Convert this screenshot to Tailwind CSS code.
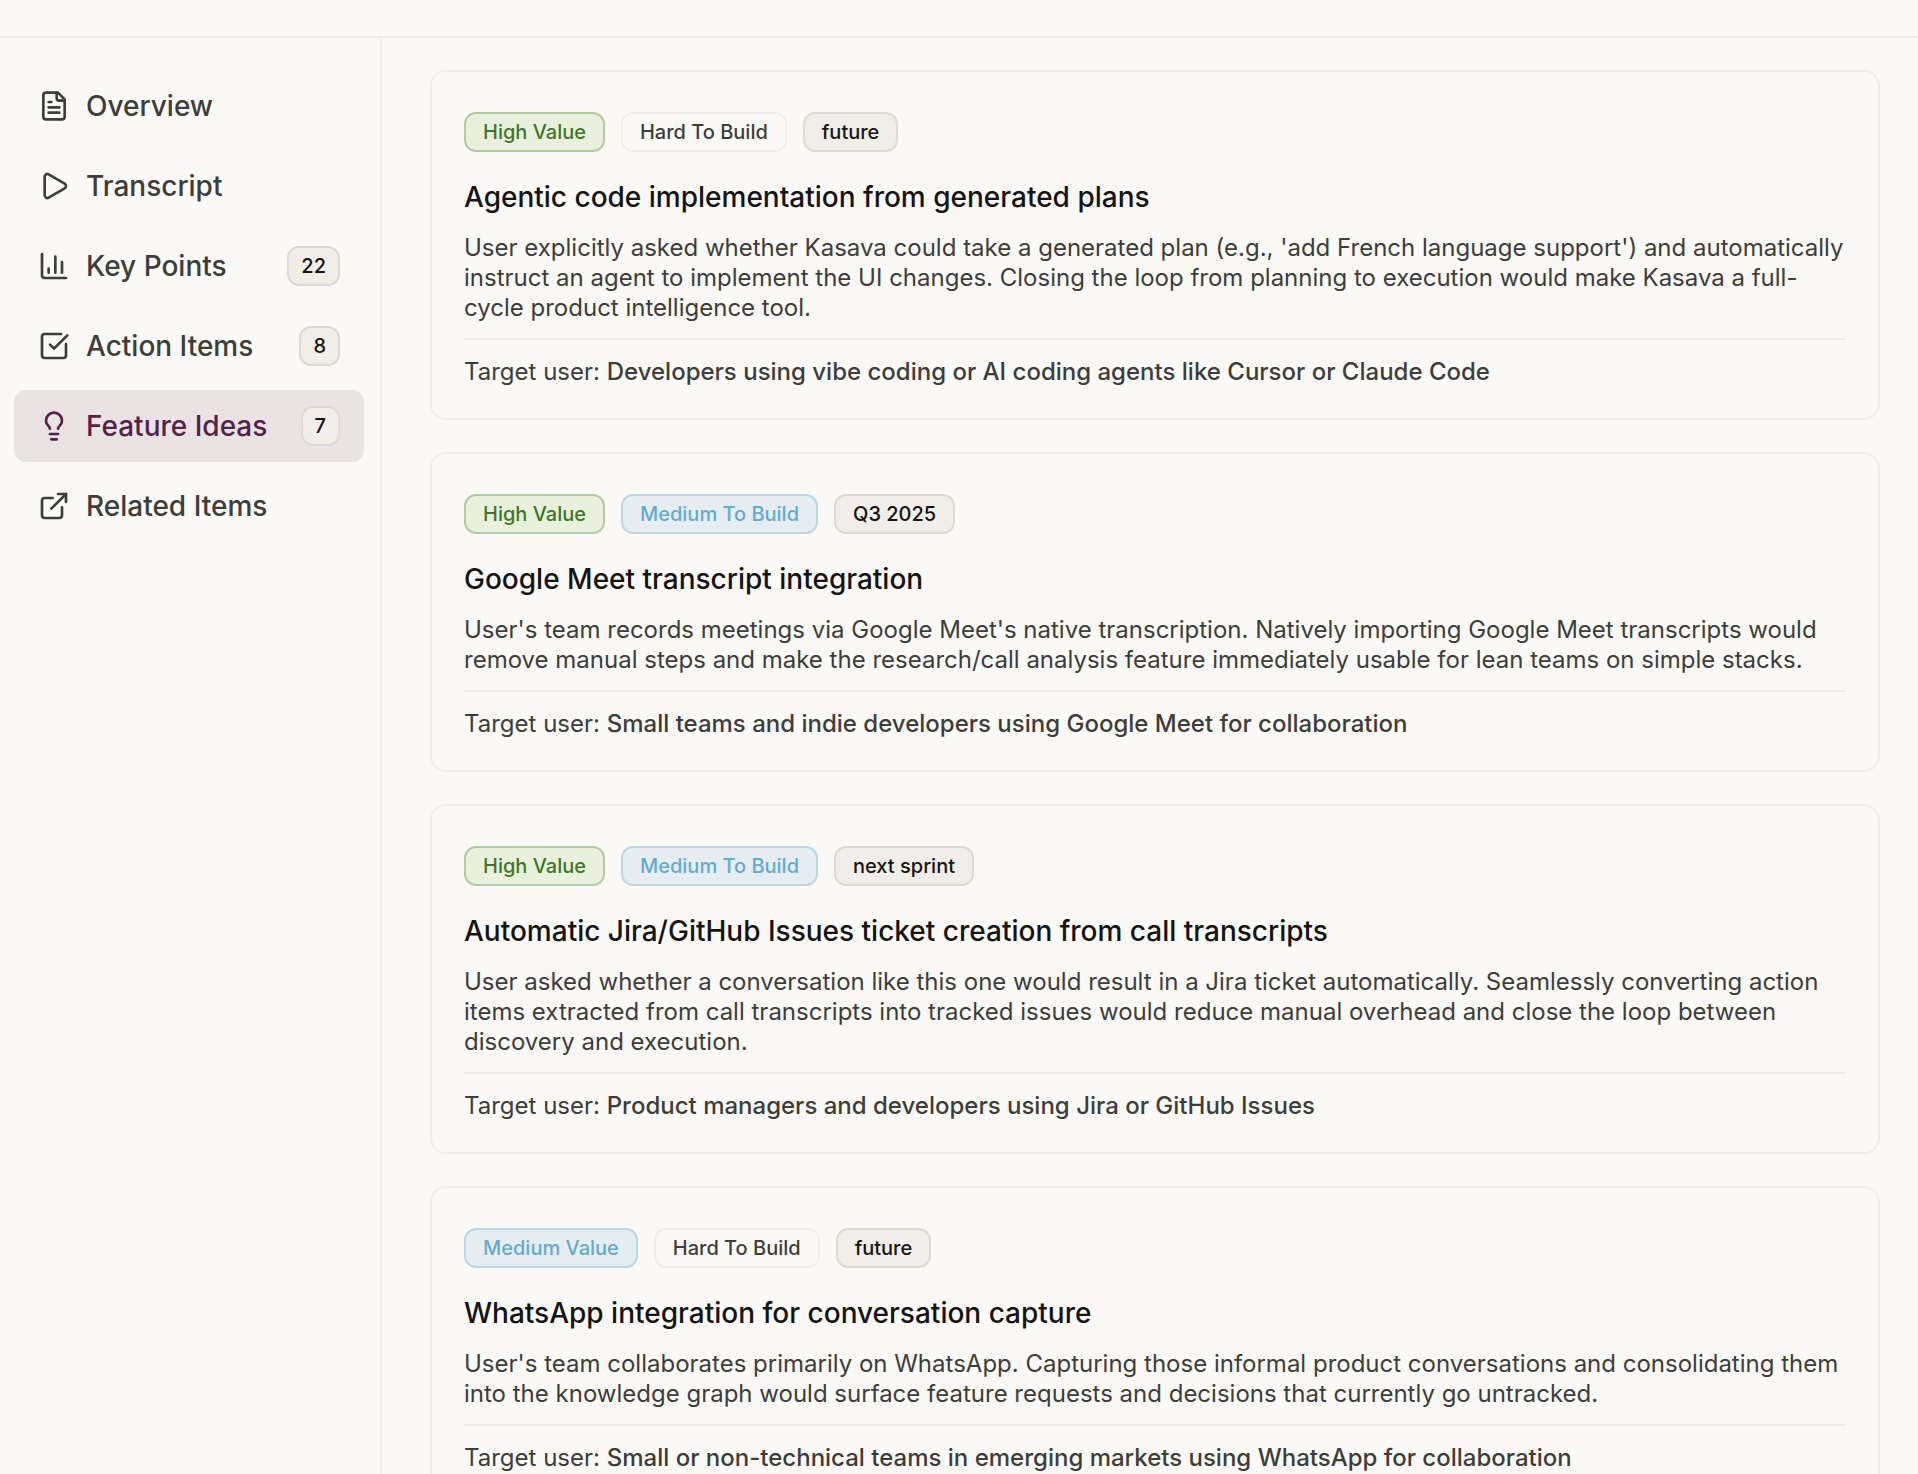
<!DOCTYPE html>
<html lang="en">
<head>
  <meta charset="UTF-8">
  <meta name="viewport" content="width=device-width, initial-scale=1.0">
  <title>Feature Ideas</title>
  <script src="https://cdn.jsdelivr.net/npm/@tailwindcss/browser@4"></script>
</head>
<body class="h-screen overflow-hidden bg-[#faf9f5] font-[Inter,'Liberation_Sans',sans-serif] text-[#3d3d3a]">
  <div class="h-full flex flex-col">
    <!-- Header -->
    <header class="h-[38px] shrink-0 border-b-2 border-[#f0efea]"></header>

    <div class="flex flex-1 min-h-0">
      <!-- Sidebar -->
      <nav class="w-[382px] shrink-0 border-r-2 border-[#f0efea] pt-8 pl-[14px] pr-4 space-y-2 text-[28px] font-medium" aria-label="Sections">
        <button class="w-full h-18 px-6 flex items-center gap-4 rounded-xl text-left">
          <svg class="size-8 shrink-0" viewBox="0 0 24 24" fill="none" stroke="currentColor" stroke-width="2" stroke-linecap="round" stroke-linejoin="round"><path d="M15 2H6a2 2 0 0 0-2 2v16a2 2 0 0 0 2 2h12a2 2 0 0 0 2-2V7Z"/><path d="M14 2v4a2 2 0 0 0 2 2h4"/><path d="M10 9H8"/><path d="M16 13H8"/><path d="M16 17H8"/></svg>
          <span class="flex-1">Overview</span>
        </button>
        <button class="w-full h-18 px-6 flex items-center gap-4 rounded-xl text-left">
          <svg class="size-8 shrink-0" viewBox="0 0 24 24" fill="none" stroke="currentColor" stroke-width="2" stroke-linecap="round" stroke-linejoin="round"><path d="M5 5a2 2 0 0 1 3.008-1.728l11.997 6.998a2 2 0 0 1 .003 3.458l-12 7A2 2 0 0 1 5 19z"/></svg>
          <span class="flex-1">Transcript</span>
        </button>
        <button class="w-full h-18 px-6 flex items-center gap-4 rounded-xl text-left">
          <svg class="size-8 shrink-0" viewBox="0 0 24 24" fill="none" stroke="currentColor" stroke-width="2" stroke-linecap="round" stroke-linejoin="round"><path d="M3 3v16a2 2 0 0 0 2 2h16"/><path d="M18 17V9"/><path d="M13 17V5"/><path d="M8 17v-3"/></svg>
          <span class="flex-1">Key Points</span>
          <span class="h-10 px-3 flex items-center rounded-xl border-2 border-[#dbdad4] bg-[#f0eee6] text-xl text-[#141413]">22</span>
        </button>
        <button class="w-full h-18 px-6 flex items-center gap-4 rounded-xl text-left">
          <svg class="size-8 shrink-0" viewBox="0 0 24 24" fill="none" stroke="currentColor" stroke-width="2" stroke-linecap="round" stroke-linejoin="round"><path d="M21 10.656V19a2 2 0 0 1-2 2H5a2 2 0 0 1-2-2V5a2 2 0 0 1 2-2h12.344"/><path d="m9 11 3 3L22 4"/></svg>
          <span class="flex-1">Action Items</span>
          <span class="h-10 px-3 flex items-center rounded-xl border-2 border-[#dbdad4] bg-[#f0eee6] text-xl text-[#141413]">8</span>
        </button>
        <button class="w-full h-18 px-6 flex items-center gap-4 rounded-xl text-left bg-[#e9e3e3] text-[#551f47]" aria-current="true">
          <svg class="size-8 shrink-0" viewBox="0 0 24 24" fill="none" stroke="currentColor" stroke-width="2" stroke-linecap="round" stroke-linejoin="round"><path d="M15 14c.2-1 .7-1.7 1.5-2.5 1-.9 1.5-2.2 1.5-3.5A6 6 0 0 0 6 8c0 1 .2 2.2 1.5 3.5.7.7 1.3 1.5 1.5 2.5"/><path d="M9 18h6"/><path d="M10 22h4"/></svg>
          <span class="flex-1">Feature Ideas</span>
          <span class="h-10 px-3 flex items-center rounded-xl border-2 border-[#dbdad4] bg-[#f0eee6] text-xl text-[#141413]">7</span>
        </button>
        <button class="w-full h-18 px-6 flex items-center gap-4 rounded-xl text-left">
          <svg class="size-8 shrink-0" viewBox="0 0 24 24" fill="none" stroke="currentColor" stroke-width="2" stroke-linecap="round" stroke-linejoin="round"><path d="M15 3h6v6"/><path d="M10 14 21 3"/><path d="M18 13v6a2 2 0 0 1-2 2H5a2 2 0 0 1-2-2V8a2 2 0 0 1 2-2h6"/></svg>
          <span class="flex-1">Related Items</span>
        </button>
      </nav>

      <!-- Feature ideas -->
      <main class="flex-1 min-w-0 overflow-hidden pt-8 pl-12 pr-[38px] space-y-8">
        <article class="rounded-2xl border-2 border-[#f0efe9] px-8 pt-10 pb-[31px]">
          <div class="flex gap-4 text-xl font-medium">
            <span class="h-10 px-[17px] flex items-center rounded-xl border-2 border-[#b3cb9f] bg-[#e9f0dc] text-[#3f7728]">High Value</span>
            <span class="h-10 px-[17px] flex items-center rounded-xl border-2 border-[#f0efe9]">Hard To Build</span>
            <span class="h-10 px-[17px] flex items-center rounded-xl border-2 border-[#dbdad4] bg-[#f0eee6] text-[#141413]">future</span>
          </div>
          <h3 class="mt-[25px] text-[28px] leading-10 font-medium text-[#141413]">Agentic code implementation from generated plans</h3>
          <p class="mt-4 text-2xl leading-[30px]">User explicitly asked whether Kasava could take a generated plan (e.g., 'add French language support') and automatically instruct an agent to implement the UI changes. Closing the loop from planning to execution would make Kasava a full-cycle product intelligence tool.</p>
          <p class="mt-[15px] pt-[17px] border-t-2 border-[#f0efea] text-2xl leading-[30px]">Target user: <span class="font-medium">Developers using vibe coding or AI coding agents like Cursor or Claude Code</span></p>
        </article>

        <article class="rounded-2xl border-2 border-[#f0efe9] px-8 pt-10 pb-[31px]">
          <div class="flex gap-4 text-xl font-medium">
            <span class="h-10 px-[17px] flex items-center rounded-xl border-2 border-[#b3cb9f] bg-[#e9f0dc] text-[#3f7728]">High Value</span>
            <span class="h-10 px-[17px] flex items-center rounded-xl border-2 border-[#b9d8e7] bg-[#e6edf0] text-[#62abd0]">Medium To Build</span>
            <span class="h-10 px-[17px] flex items-center rounded-xl border-2 border-[#dbdad4] bg-[#f0eee6] text-[#141413]">Q3 2025</span>
          </div>
          <h3 class="mt-[25px] text-[28px] leading-10 font-medium text-[#141413]">Google Meet transcript integration</h3>
          <p class="mt-4 text-2xl leading-[30px]">User's team records meetings via Google Meet's native transcription. Natively importing Google Meet transcripts would remove manual steps and make the research/call analysis feature immediately usable for lean teams on simple stacks.</p>
          <p class="mt-[15px] pt-[17px] border-t-2 border-[#f0efea] text-2xl leading-[30px]">Target user: <span class="font-medium">Small teams and indie developers using Google Meet for collaboration</span></p>
        </article>

        <article class="rounded-2xl border-2 border-[#f0efe9] px-8 pt-10 pb-[31px]">
          <div class="flex gap-4 text-xl font-medium">
            <span class="h-10 px-[17px] flex items-center rounded-xl border-2 border-[#b3cb9f] bg-[#e9f0dc] text-[#3f7728]">High Value</span>
            <span class="h-10 px-[17px] flex items-center rounded-xl border-2 border-[#b9d8e7] bg-[#e6edf0] text-[#62abd0]">Medium To Build</span>
            <span class="h-10 px-[17px] flex items-center rounded-xl border-2 border-[#dbdad4] bg-[#f0eee6] text-[#141413]">next sprint</span>
          </div>
          <h3 class="mt-[25px] text-[28px] leading-10 font-medium text-[#141413]">Automatic Jira/GitHub Issues ticket creation from call transcripts</h3>
          <p class="mt-4 text-2xl leading-[30px]">User asked whether a conversation like this one would result in a Jira ticket automatically. Seamlessly converting action items extracted from call transcripts into tracked issues would reduce manual overhead and close the loop between discovery and execution.</p>
          <p class="mt-[15px] pt-[17px] border-t-2 border-[#f0efea] text-2xl leading-[30px]">Target user: <span class="font-medium">Product managers and developers using Jira or GitHub Issues</span></p>
        </article>

        <article class="rounded-2xl border-2 border-[#f0efe9] px-8 pt-10 pb-[31px]">
          <div class="flex gap-4 text-xl font-medium">
            <span class="h-10 px-[17px] flex items-center rounded-xl border-2 border-[#b9d8e7] bg-[#e6edf0] text-[#62abd0]">Medium Value</span>
            <span class="h-10 px-[17px] flex items-center rounded-xl border-2 border-[#f0efe9]">Hard To Build</span>
            <span class="h-10 px-[17px] flex items-center rounded-xl border-2 border-[#dbdad4] bg-[#f0eee6] text-[#141413]">future</span>
          </div>
          <h3 class="mt-[25px] text-[28px] leading-10 font-medium text-[#141413]">WhatsApp integration for conversation capture</h3>
          <p class="mt-4 text-2xl leading-[30px]">User's team collaborates primarily on WhatsApp. Capturing those informal product conversations and consolidating them into the knowledge graph would surface feature requests and decisions that currently go untracked.</p>
          <p class="mt-[15px] pt-[17px] border-t-2 border-[#f0efea] text-2xl leading-[30px]">Target user: <span class="font-medium">Small or non-technical teams in emerging markets using WhatsApp for collaboration</span></p>
        </article>
      </main>
    </div>
  </div>
</body>
</html>
